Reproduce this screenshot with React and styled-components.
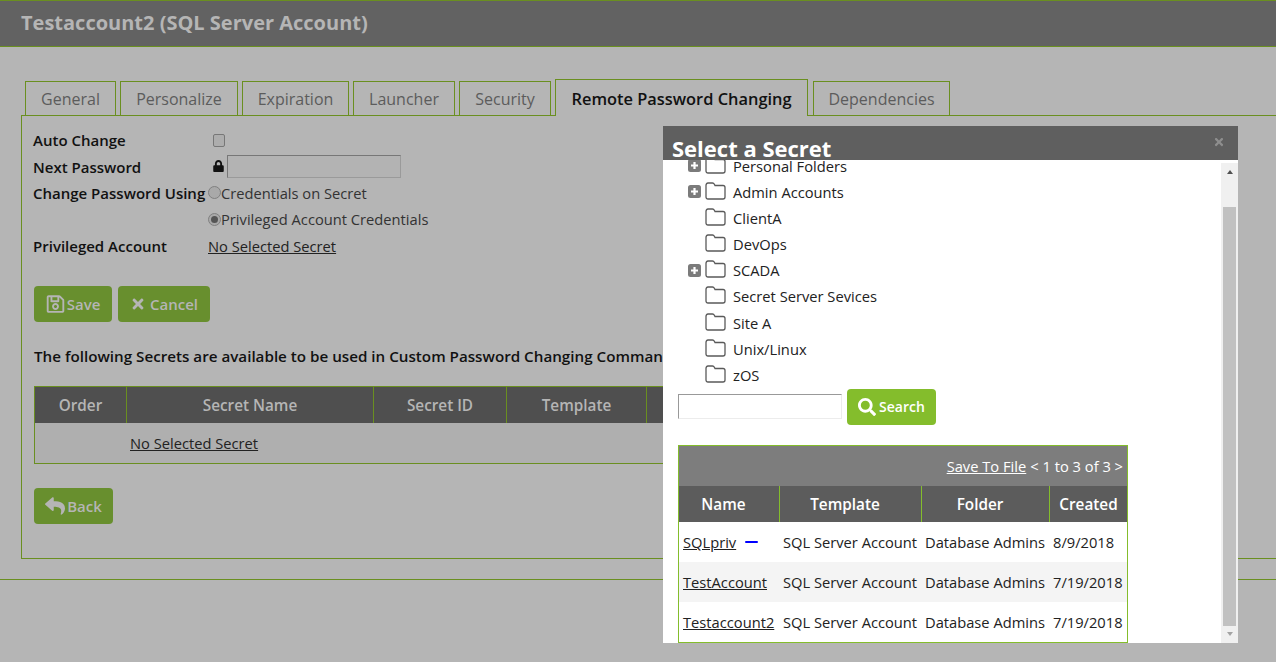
import { Fragment } from "react";
import styled, { createGlobalStyle } from "styled-components";
import { FaRegSave, FaTimes, FaReply, FaSearch, FaLock } from "react-icons/fa";

const GlobalStyle = createGlobalStyle`
  html, body {
    margin: 0;
    height: 100%;
    overflow: hidden;
    background: #b5b5b5;
  }
  body {
    font-family: "Open Sans", "Liberation Sans", sans-serif;
    font-size: 14.7px;
    color: #1a1a1a;
  }
  * {
    box-sizing: border-box;
  }
`;

const Page = styled.div`
  position: relative;
  width: 1276px;
  height: 662px;
  overflow: hidden;
  background: #b5b5b5;
`;

const Header = styled.header`
  height: 47px;
  background: #626262;
  border-top: 1px solid #6a8f20;
  border-bottom: 1px solid #6a8f20;
  padding: 0 21px;
  display: flex;
  align-items: center;
`;

const Title = styled.h1`
  margin: 0 0 2px;
  font-size: 20px;
  font-weight: 700;
  color: #b5b5b5;
`;

const Content = styled.main`
  padding-top: 32px;
`;

const Tabs = styled.div`
  display: flex;
  align-items: flex-end;
  gap: 4px;
  margin-left: 25px;
  height: 37px;
  margin-bottom: -1px;
  position: relative;
`;

const Tab = styled.div`
  height: ${(p) => (p.$active ? "37px" : "35px")};
  width: ${(p) => p.$w}px;
  display: flex;
  align-items: center;
  justify-content: center;
  padding-top: 1px;
  font-size: ${(p) => (p.$active ? 16.4 : 16)}px;
  font-weight: ${(p) => (p.$active ? 600 : 400)};
  color: ${(p) => (p.$active ? "#111" : "#5c5c5c")};
  border: 1px solid #6a8f20;
  border-bottom: ${(p) => (p.$active ? "none" : "1px solid #6a8f20")};
  background: #b5b5b5;
  margin-left: ${(p) => p.$gap || 0}px;
`;

const Panel = styled.section`
  margin-left: 21px;
  height: 444px;
  border: 1px solid #6a8f20;
  border-right: none;
  padding: 11px;
`;

const FormGrid = styled.div`
  display: grid;
  grid-template-columns: 175px 1fr;
  grid-auto-rows: 26.4px;
  align-items: center;
`;

const FieldLabel = styled.div`
  font-weight: 600;
  font-size: 15px;
  color: #111;
  white-space: nowrap;
`;

const FieldValue = styled.div`
  display: flex;
  align-items: center;
  color: #333;
`;

const Checkbox = styled.span`
  width: 12px;
  height: 13px;
  margin: 1px 0 0 5px;
  border: 1px solid #777;
  border-radius: 2px;
  background: #adadad;
`;

const LockIcon = styled(FaLock)`
  width: 11px;
  height: 12px;
  margin: 0 3px 2px 5px;
  color: #111;
`;

const PasswordInput = styled.div`
  width: 174px;
  height: 23px;
  border: 1px solid #9a9a9a;
  border-top-color: #777;
  border-left-color: #777;
  background: #b3b3b3;
`;

const Radio = styled.span`
  width: 13px;
  height: 13px;
  border-radius: 50%;
  border: 1px solid #808080;
  background: #a9a9a9;
  display: flex;
  align-items: center;
  justify-content: center;
  flex: none;

  &::after {
    content: "";
    display: ${(p) => (p.$checked ? "block" : "none")};
    width: 7px;
    height: 7px;
    border-radius: 50%;
    background: #555;
  }
`;

const PlainLink = styled.a`
  color: #222;
  text-decoration: underline;
`;

const ButtonRow = styled.div`
  display: flex;
  gap: 6px;
  margin: 27px 0 0 1px;
`;

const Button = styled.div`
  height: 36px;
  width: ${(p) => p.$w}px;
  display: flex;
  align-items: center;
  justify-content: center;
  gap: ${(p) => p.$gap || 3}px;
  background: ${(p) => (p.$bright ? "#84bd2c" : "#688f2e")};
  color: ${(p) => (p.$bright ? "#fff" : "#b5b5b5")};
  border-radius: 4px;
  font-size: ${(p) => (p.$bright ? 14 : 15)}px;
  font-weight: 600;

  svg {
    flex: none;
  }
`;

const Note = styled.p`
  margin: 24px 0 0 1px;
  font-size: 15.2px;
  font-weight: 600;
  color: #111;
  line-height: 20px;
  white-space: nowrap;
`;

const SecretTable = styled.div`
  margin: 20px 0 0 1px;
  width: 1000px;
  height: 78px;
  border: 1px solid #6a8f20;
`;

const SecretHead = styled.div`
  display: grid;
  grid-template-columns: 92px 247px 133px 140px 1fr;
  height: 36px;
  background: #4f4f4f;
`;

const SecretCell = styled.div`
  display: flex;
  align-items: center;
  justify-content: center;
  padding-top: 1px;
  color: #b5b5b5;
  font-size: 15.3px;
  font-weight: 600;
  border-right: 1px solid #6a8f20;
`;

const SecretBody = styled.div`
  height: 40px;
  background: #afafaf;
  padding-left: 95px;
  display: flex;
  align-items: center;
`;

const BackRow = styled(ButtonRow)`
  margin-top: 24px;
`;

const Footer = styled.div`
  margin-top: 20px;
  border-top: 1px solid #6a8f20;
`;

const Modal = styled.div`
  position: absolute;
  left: 663px;
  top: 126px;
  width: 575px;
  height: 517px;
  background: #fff;
  display: flex;
  flex-direction: column;
`;

const ModalHead = styled.div`
  height: 34px;
  flex: none;
  background: #5f5f5f;
  display: flex;
  align-items: flex-end;
  justify-content: space-between;
  padding: 0 13px 0 9px;
  position: relative;
  z-index: 1;
`;

const ModalTitle = styled.h2`
  margin: 0 0 -2px;
  font-size: 22px;
  line-height: 27px;
  font-weight: 700;
  color: #fff;
`;

const CloseIcon = styled(FaTimes)`
  width: 12px;
  height: 12px;
  align-self: flex-start;
  margin-top: 10px;
  color: #8e8e8e;
`;

const ModalBody = styled.div`
  flex: 1;
  display: flex;
  min-height: 0;
`;

const ScrollArea = styled.div`
  flex: 1;
  min-width: 0;
  overflow: hidden;
  padding-left: 15px;
`;

const Tree = styled.div`
  margin-top: -7.6px;
`;

const TreeRow = styled.div`
  display: flex;
  align-items: center;
  height: 26.2px;
  color: #222;
`;

const Expander = styled.svg`
  width: 13px;
  height: 13px;
  margin-left: 10px;
  flex: none;
  visibility: ${(p) => (p.$hidden ? "hidden" : "visible")};
`;

const FolderIcon = styled.svg`
  width: 21px;
  height: 19px;
  margin: 0 7px 3px 4px;
  flex: none;
`;

const SearchRow = styled.div`
  display: flex;
  align-items: center;
  gap: 5px;
  margin-top: 0.6px;
`;

const SearchInput = styled.div`
  width: 164px;
  height: 25px;
  border: 1px solid #ececec;
  border-top-color: #999;
  border-left-color: #999;
  background: #fff;
`;

const ResultTable = styled.div`
  margin-top: 20px;
  width: 450px;
  border: 1px solid #84bd2c;
`;

const Pager = styled.div`
  height: 40px;
  background: #7d7d7d;
  color: #fff;
  display: flex;
  align-items: center;
  justify-content: flex-end;
  padding: 1px 4px 0 0;
  white-space: nowrap;
`;

const PagerLink = styled.a`
  color: #fff;
  text-decoration: underline;
  margin-right: 4px;
`;

const ResultGrid = styled.div`
  display: grid;
  grid-template-columns: 101px 142px 128px 1fr;
`;

const ResultHeadCell = styled.div`
  height: 36px;
  background: #5c5c5c;
  color: #fff;
  font-size: 15.3px;
  font-weight: 600;
  display: flex;
  align-items: center;
  justify-content: center;
  padding: 1px ${(p) => (p.$last ? 0 : 11)}px 0 0;
  border-right: ${(p) => (p.$last ? "none" : "1px solid #84bd2c")};
`;

const ResultCell = styled.div`
  height: 40px;
  display: flex;
  align-items: center;
  padding-left: 3px;
  white-space: nowrap;
  color: #222;
  background: ${(p) => (p.$odd ? "#f4f4f4" : "#fff")};

  ${PlainLink} {
    margin-left: 1px;
  }
`;

const Dash = styled.span`
  width: 13px;
  height: 2px;
  border-radius: 1px;
  margin-left: 9px;
  background: #0000ff;
`;

const Scrollbar = styled.div`
  width: 17px;
  margin-top: 3px;
  flex: none;
  background: #f0f0f0;
  display: flex;
  flex-direction: column;
  align-items: center;
`;

const ScrollArrow = styled.div`
  height: ${(p) => p.$h}px;
  flex: none;
  display: flex;
  align-items: ${(p) => (p.$down ? "center" : "flex-start")};
  justify-content: center;
  padding-top: ${(p) => (p.$down ? 0 : 7)}px;

  &::before {
    content: "";
    border-left: 3.5px solid transparent;
    border-right: 3.5px solid transparent;
    ${(p) =>
      p.$down
        ? "border-top: 4px solid #a3a3a3;"
        : "border-bottom: 4px solid #505050;"}
  }
`;

const ScrollThumb = styled.div`
  width: 13px;
  height: 419px;
  flex: none;
  background: #c1c1c1;
`;

const SaveIcon = styled(FaRegSave)`
  width: 19px;
  height: 20px;
`;

const folders = [
  { name: "Personal Folders", expand: true },
  { name: "Admin Accounts", expand: true },
  { name: "ClientA" },
  { name: "DevOps" },
  { name: "SCADA", expand: true },
  { name: "Secret Server Sevices" },
  { name: "Site A" },
  { name: "Unix/Linux" },
  { name: "zOS" },
];

const results = [
  { name: "SQLpriv", created: "8/9/2018", dash: true },
  { name: "TestAccount", created: "7/19/2018" },
  { name: "Testaccount2", created: "7/19/2018" },
];

function TreeItem({ name, expand }) {
  return (
    <TreeRow>
      <Expander viewBox="0 0 13 13" $hidden={!expand}>
        <rect width="13" height="13" rx="2.5" fill="#7b7b7b" />
        <path d="M6.5 3v7M3 6.5h7" stroke="#fff" strokeWidth="2.2" />
      </Expander>
      <FolderIcon viewBox="0 0 21 19">
        <path
          d="M1 4.5C1 3 1.8 2 3 2h4.5c1 0 1.5.5 2 1.5l.5 1h8c1.2 0 2 .8 2 2V16c0 1.2-.8 2-2 2H3c-1.2 0-2-.8-2-2V4.5z"
          fill="#fff"
          stroke="#5a5a5a"
          strokeWidth="1.3"
        />
      </FolderIcon>
      {name}
    </TreeRow>
  );
}

export default function App() {
  return (
    <Page>
      <GlobalStyle />
      <Header>
        <Title>Testaccount2 (SQL Server Account)</Title>
      </Header>
      <Content>
        <Tabs>
          <Tab $w={91}>General</Tab>
          <Tab $w={118}>Personalize</Tab>
          <Tab $w={107}>Expiration</Tab>
          <Tab $w={102}>Launcher</Tab>
          <Tab $w={92}>Security</Tab>
          <Tab $w={253} $active>
            Remote Password Changing
          </Tab>
          <Tab $w={137} $gap={1}>
            Dependencies
          </Tab>
        </Tabs>
        <Panel>
          <FormGrid>
            <FieldLabel>Auto Change</FieldLabel>
            <FieldValue>
              <Checkbox />
            </FieldValue>
            <FieldLabel>Next Password</FieldLabel>
            <FieldValue>
              <LockIcon />
              <PasswordInput />
            </FieldValue>
            <FieldLabel>Change Password Using</FieldLabel>
            <FieldValue>
              <Radio />
              Credentials on Secret
            </FieldValue>
            <span />
            <FieldValue>
              <Radio $checked />
              Privileged Account Credentials
            </FieldValue>
            <FieldLabel>Privileged Account</FieldLabel>
            <FieldValue>
              <PlainLink>No Selected Secret</PlainLink>
            </FieldValue>
          </FormGrid>
          <ButtonRow>
            <Button $w={78} $gap={2}>
              <SaveIcon />
              Save
            </Button>
            <Button $w={92} $gap={4}>
              <FaTimes size={16} />
              Cancel
            </Button>
          </ButtonRow>
          <Note>
            The following Secrets are available to be used in Custom Password
            Changing Commands
          </Note>
          <SecretTable>
            <SecretHead>
              <SecretCell>Order</SecretCell>
              <SecretCell>Secret Name</SecretCell>
              <SecretCell>Secret ID</SecretCell>
              <SecretCell>Template</SecretCell>
              <SecretCell />
            </SecretHead>
            <SecretBody>
              <PlainLink>No Selected Secret</PlainLink>
            </SecretBody>
          </SecretTable>
          <BackRow>
            <Button $w={79} $gap={2}>
              <FaReply size={20} />
              Back
            </Button>
          </BackRow>
        </Panel>
        <Footer />
      </Content>

      <Modal>
        <ModalHead>
          <ModalTitle>Select a Secret</ModalTitle>
          <CloseIcon />
        </ModalHead>
        <ModalBody>
          <ScrollArea>
            <Tree>
              {folders.map((f) => (
                <TreeItem key={f.name} name={f.name} expand={f.expand} />
              ))}
            </Tree>
            <SearchRow>
              <SearchInput />
              <Button $w={89} $bright>
                <FaSearch size={18} />
                Search
              </Button>
            </SearchRow>
            <ResultTable>
              <Pager>
                <PagerLink>Save To File</PagerLink>
                {"< 1 to 3 of 3 >"}
              </Pager>
              <ResultGrid>
                <ResultHeadCell>Name</ResultHeadCell>
                <ResultHeadCell>Template</ResultHeadCell>
                <ResultHeadCell>Folder</ResultHeadCell>
                <ResultHeadCell $last>Created</ResultHeadCell>
                {results.map((r, i) => (
                  <Fragment key={r.name}>
                    <ResultCell $odd={i === 1}>
                      <PlainLink>{r.name}</PlainLink>
                      {r.dash && <Dash />}
                    </ResultCell>
                    <ResultCell $odd={i === 1}>SQL Server Account</ResultCell>
                    <ResultCell $odd={i === 1}>Database Admins</ResultCell>
                    <ResultCell $odd={i === 1}>{r.created}</ResultCell>
                  </Fragment>
                ))}
              </ResultGrid>
            </ResultTable>
          </ScrollArea>
          <Scrollbar>
            <ScrollArrow $h={44} />
            <ScrollThumb />
            <ScrollArrow $h={16} $down />
          </Scrollbar>
        </ModalBody>
      </Modal>
    </Page>
  );
}
